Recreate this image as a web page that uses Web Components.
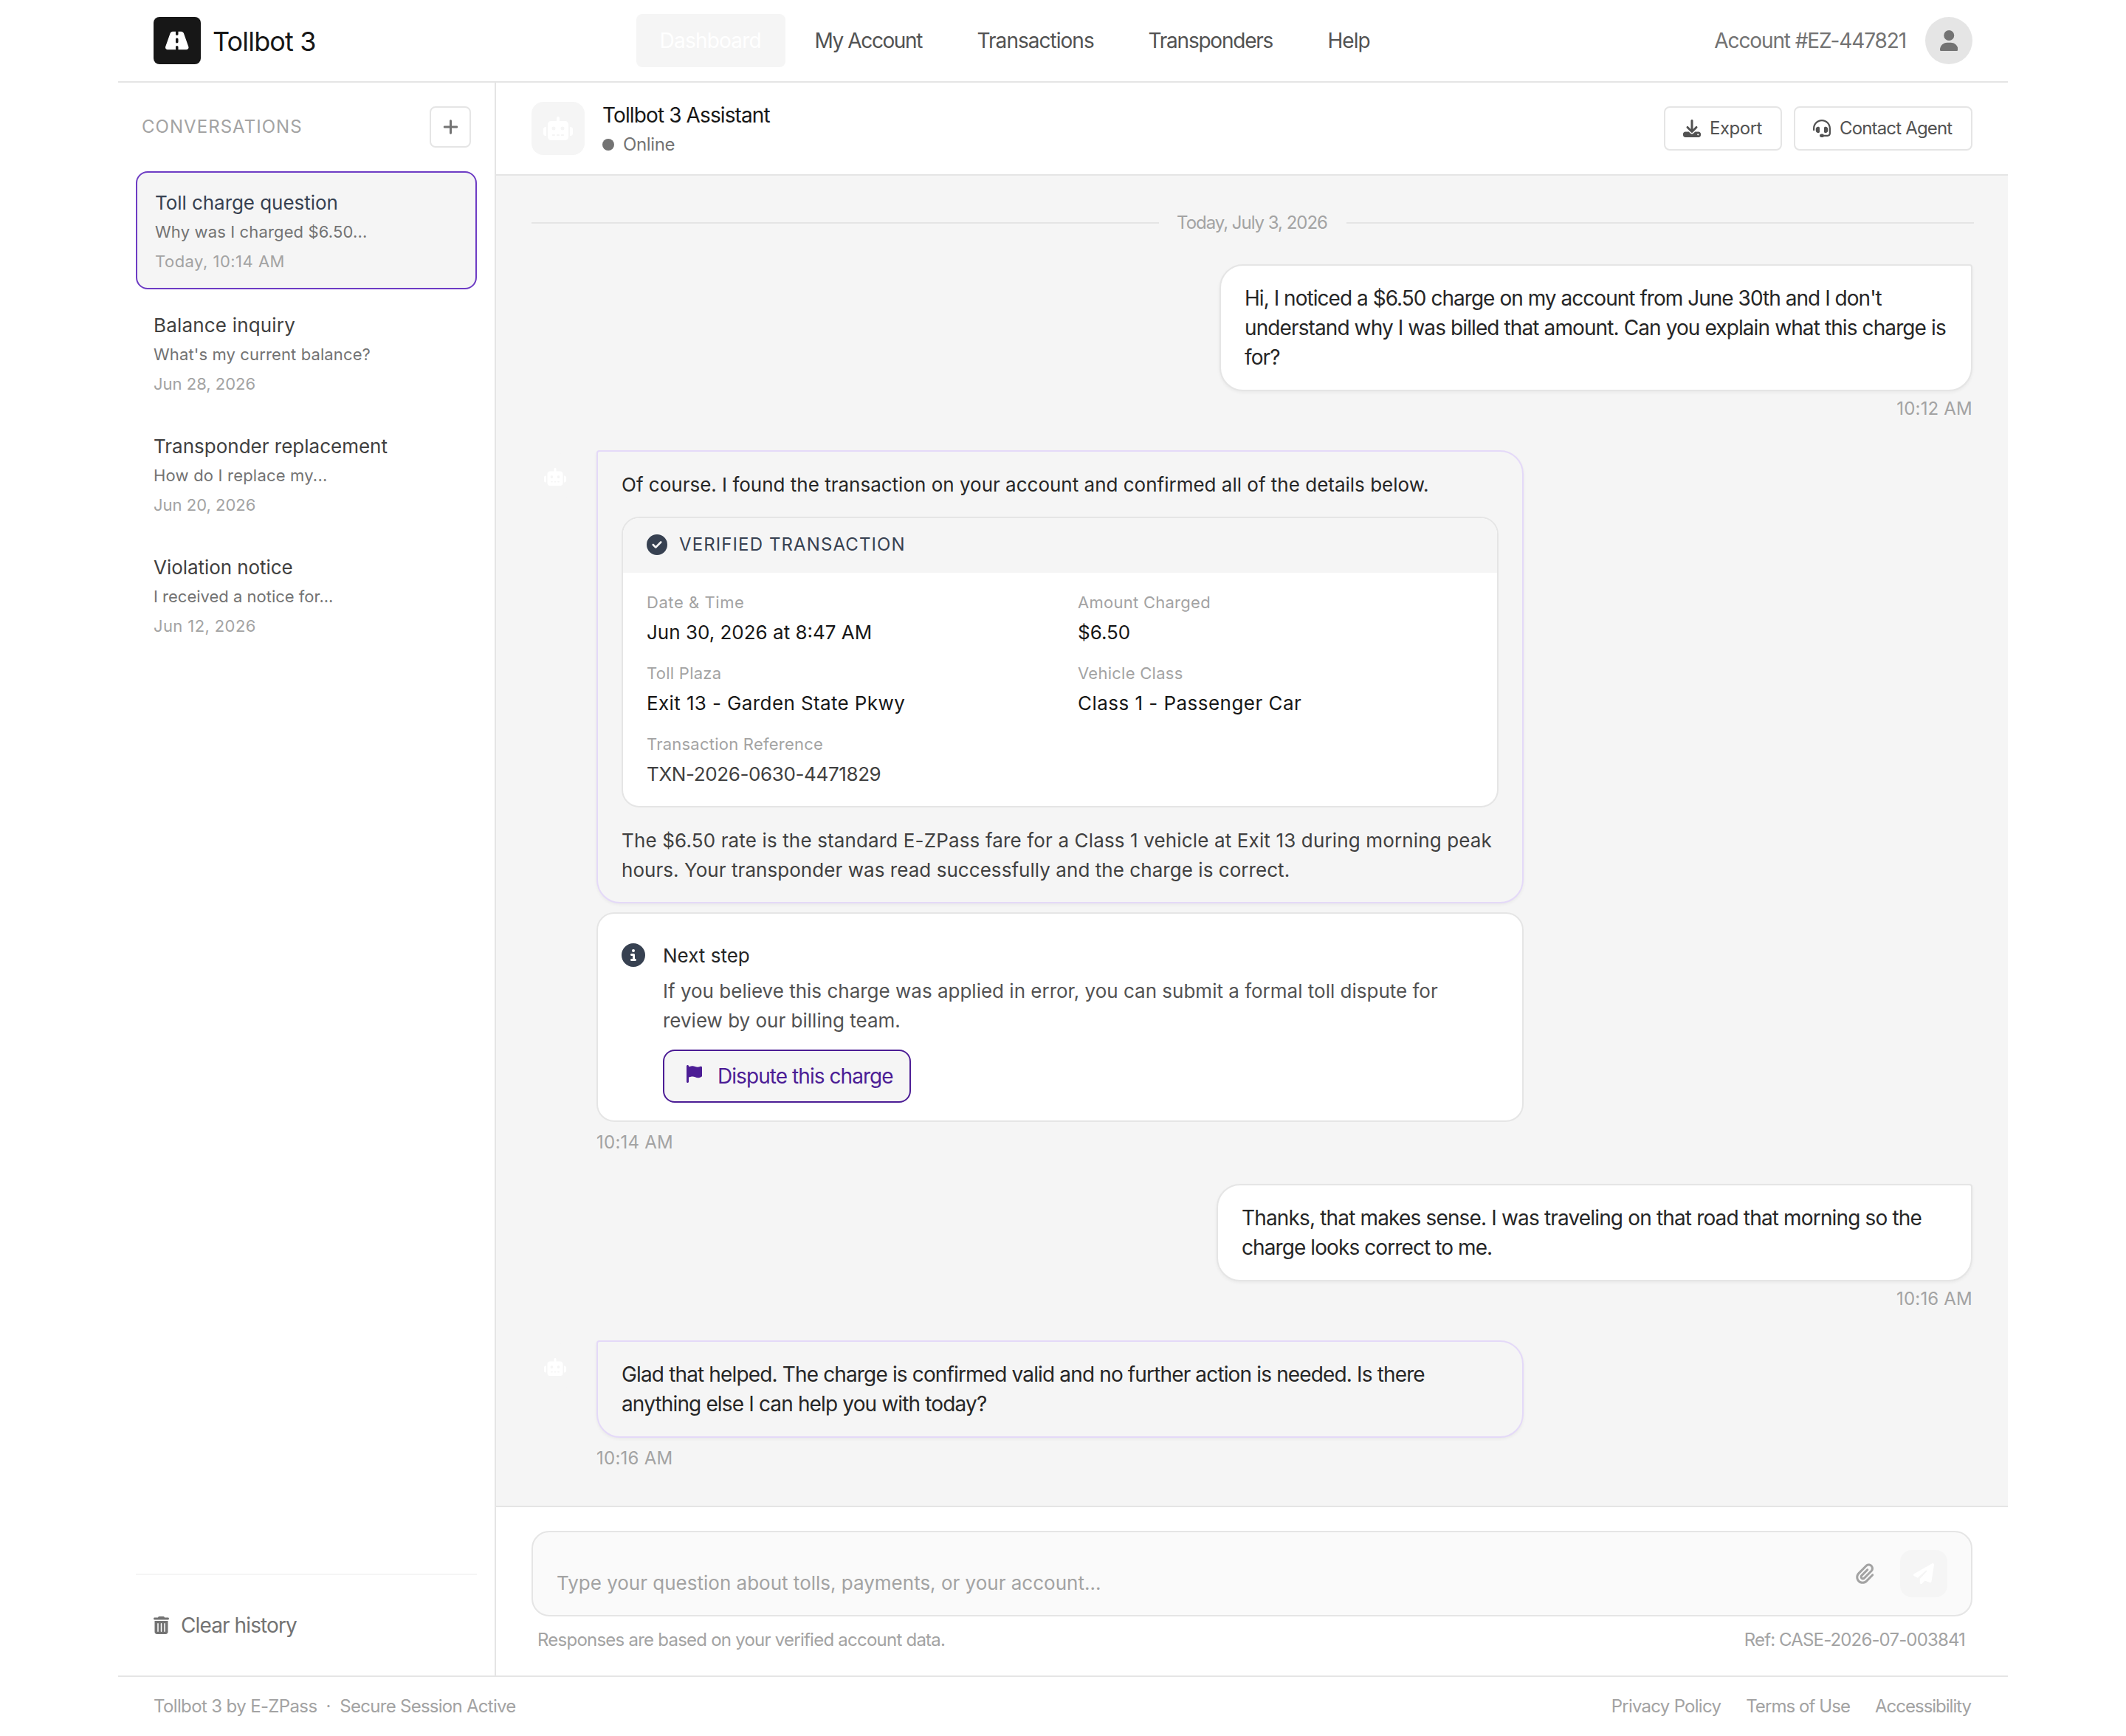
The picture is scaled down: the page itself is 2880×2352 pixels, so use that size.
<!DOCTYPE html>
<html lang="en">
<head>
<meta charset="utf-8">
<title>Tollbot 3</title>
<style>
  :root {
    --ink: #171717;
    --body: #262626;
    --strong: #404040;
    --medium: #525252;
    --muted: #737373;
    --faint: #a3a3a3;
    --line: #e5e5e5;
    --fill: #f5f5f5;
    --slate: #374151;
    --lavender: #e4d9f8;
    --violet: #6d3cc4;
    --deep-violet: #4c1d95;
  }
  body {
    margin: 0;
    background: #fff;
    font-family: Inter, "Liberation Sans", sans-serif;
    color: var(--body);
  }
</style>
</head>
<body>
<toll-app></toll-app>

<script>
const ICONS = {
  road: [576, 'M256 32H181.2c-27.1 0-51.3 17.1-60.3 42.6L3.1 407.2C1.1 413 0 419.2 0 425.4C0 455.5 24.5 480 54.6 480H256V416c0-17.7 14.3-32 32-32s32 14.3 32 32v64H521.4c30.2 0 54.6-24.5 54.6-54.6c0-6.2-1.1-12.4-3.1-18.2L455.1 74.6C446 49.1 421.9 32 394.8 32H320V96c0 17.7-14.3 32-32 32s-32-14.3-32-32V32zm64 192v64c0 17.7-14.3 32-32 32s-32-14.3-32-32V224c0-17.7 14.3-32 32-32s32 14.3 32 32z'],
  robot: [640, 'M320 0c17.7 0 32 14.3 32 32V96H472c39.8 0 72 32.2 72 72V440c0 39.8-32.2 72-72 72H168c-39.8 0-72-32.2-72-72V168c0-39.8 32.2-72 72-72H288V32c0-17.7 14.3-32 32-32zM208 384c-8.8 0-16 7.2-16 16s7.2 16 16 16h32c8.8 0 16-7.2 16-16s-7.2-16-16-16H208zm96 0c-8.8 0-16 7.2-16 16s7.2 16 16 16h32c8.8 0 16-7.2 16-16s-7.2-16-16-16H304zm96 0c-8.8 0-16 7.2-16 16s7.2 16 16 16h32c8.8 0 16-7.2 16-16s-7.2-16-16-16H400zM264 256a40 40 0 1 0 -80 0 40 40 0 1 0 80 0zm152 40a40 40 0 1 0 0-80 40 40 0 1 0 0 80zM48 224H64V416H48c-26.5 0-48-21.5-48-48V272c0-26.5 21.5-48 48-48zm544 0c26.5 0 48 21.5 48 48v96c0 26.5-21.5 48-48 48H576V224h16z'],
  user: [448, 'M224 256A128 128 0 1 0 224 0a128 128 0 1 0 0 256zm-45.7 48C79.8 304 0 383.8 0 482.3C0 498.7 13.3 512 29.7 512H418.3c16.4 0 29.7-13.3 29.7-29.7C448 383.8 368.2 304 269.7 304H178.3z'],
  plus: [448, 'M256 80c0-17.7-14.3-32-32-32s-32 14.3-32 32V224H48c-17.7 0-32 14.3-32 32s14.3 32 32 32H192V432c0 17.7 14.3 32 32 32s32-14.3 32-32V288H400c17.7 0 32-14.3 32-32s-14.3-32-32-32H256V80z'],
  download: [512, 'M288 32c0-17.7-14.3-32-32-32s-32 14.3-32 32V274.7l-73.4-73.4c-12.5-12.5-32.8-12.5-45.3 0s-12.5 32.8 0 45.3l128 128c12.5 12.5 32.8 12.5 45.3 0l128-128c12.5-12.5 12.5-32.8 0-45.3s-32.8-12.5-45.3 0L288 274.7V32zM64 352c-35.3 0-64 28.7-64 64v32c0 35.3 28.7 64 64 64H448c35.3 0 64-28.7 64-64V416c0-35.3-28.7-64-64-64H346.5l-45.3 45.3c-25 25-65.5 25-90.5 0L165.5 352H64zm368 56a24 24 0 1 1 0 48 24 24 0 1 1 0-48z'],
  headset: [512, 'M256 48C141.1 48 48 141.1 48 256v40c0 13.3-10.7 24-24 24s-24-10.7-24-24V256C0 114.6 114.6 0 256 0S512 114.6 512 256V400.1c0 48.6-39.4 88-88.1 88L313.6 488c-8.3 14.3-23.8 24-41.6 24H240c-26.5 0-48-21.5-48-48s21.5-48 48-48h32c17.8 0 33.3 9.7 41.6 24l110.4 .1c22.1 0 40-17.9 40-40V256c0-114.9-93.1-208-208-208zM144 208h16c17.7 0 32 14.3 32 32V352c0 17.7-14.3 32-32 32H144c-35.3 0-64-28.7-64-64V272c0-35.3 28.7-64 64-64zm224 0c35.3 0 64 28.7 64 64v48c0 35.3-28.7 64-64 64H352c-17.7 0-32-14.3-32-32V240c0-17.7 14.3-32 32-32h16z'],
  check: [512, 'M256 512A256 256 0 1 0 256 0a256 256 0 1 0 0 512zM369 209L241 337c-9.4 9.4-24.6 9.4-33.9 0l-64-64c-9.4-9.4-9.4-24.6 0-33.9s24.6-9.4 33.9 0l47 47L335 175c9.4-9.4 24.6-9.4 33.9 0s9.4 24.6 0 33.9z'],
  info: [512, 'M256 512A256 256 0 1 0 256 0a256 256 0 1 0 0 512zM216 336h24V272H216c-13.3 0-24-10.7-24-24s10.7-24 24-24h48c13.3 0 24 10.7 24 24v88h8c13.3 0 24 10.7 24 24s-10.7 24-24 24H216c-13.3 0-24-10.7-24-24s10.7-24 24-24zm40-208a32 32 0 1 1 0 64 32 32 0 1 1 0-64z'],
  flag: [448, 'M64 32C64 14.3 49.7 0 32 0S0 14.3 0 32V64 368 480c0 17.7 14.3 32 32 32s32-14.3 32-32V352l64.3-16.1c41.1-10.3 84.6-5.5 122.5 13.4c44.2 22.1 95.5 24.8 141.7 7.4l34.7-13c12.5-4.7 20.8-16.6 20.8-30V66.1c0-23-24.2-38-44.8-27.7l-9.6 4.8c-46.3 23.2-100.8 23.2-147.1 0c-35.1-17.6-75.4-22-113.5-12.5L64 48V32z'],
  trash: [448, 'M135.2 17.7L128 32H32C14.3 32 0 46.3 0 64S14.3 96 32 96H416c17.7 0 32-14.3 32-32s-14.3-32-32-32H320l-7.2-14.3C307.4 6.8 296.3 0 284.2 0H163.8c-12.1 0-23.2 6.8-28.6 17.7zM416 128H32V448c0 35.3 28.7 64 64 64H352c35.3 0 64-28.7 64-64V128zM144 208V432c0 8.8-7.2 16-16 16s-16-7.2-16-16V208c0-8.8 7.2-16 16-16s16 7.2 16 16zm96 0V432c0 8.8-7.2 16-16 16s-16-7.2-16-16V208c0-8.8 7.2-16 16-16s16 7.2 16 16zm96 0V432c0 8.8-7.2 16-16 16s-16-7.2-16-16V208c0-8.8 7.2-16 16-16s16 7.2 16 16z'],
  clip: [448, 'M364.2 83.8c-24.4-24.4-64-24.4-88.4 0l-184 184c-42.1 42.1-42.1 110.3 0 152.4s110.3 42.1 152.4 0l152-152c10.9-10.9 28.7-10.9 39.6 0s10.9 28.7 0 39.6l-152 152c-64 64-167.6 64-231.6 0s-64-167.6 0-231.6l184-184c46.3-46.3 121.3-46.3 167.6 0s46.3 121.3 0 167.6l-176 176c-28.6 28.6-75 28.6-103.6 0s-28.6-75 0-103.6l144-144c10.9-10.9 28.7-10.9 39.6 0s10.9 28.7 0 39.6l-144 144c-6.7 6.7-6.7 17.7 0 24.4s17.7 6.7 24.4 0l176-176c24.4-24.4 24.4-64 0-88.4z'],
  plane: [512, 'M498.1 5.6c10.1 7 15.4 19.1 13.5 31.2l-64 416c-1.5 9.7-7.4 18.2-16 23s-18.9 5.4-28 1.6L284 427.7l-68.5 74.1c-8.9 9.7-22.9 12.9-35.2 8.1S160 493.2 160 480V396.4c0-4 1.5-7.8 4.2-10.7L331.8 202.8c5.8-6.3 5.6-16-.4-22s-15.7-6.4-22-.7L106 360.8 17.7 316.6C7.1 311.3 .3 300.7 0 288.9s5.9-22.8 16.1-28.7l448-256c10.7-6.1 23.9-5.5 34 1.4z']
}

// registers an element whose shadow root is filled from a template
function define(name, html) {
  const template = document.createElement('template')
  template.innerHTML = html
  customElements.define(name, class extends HTMLElement {
    constructor() {
      super()
      this.attachShadow({ mode: 'open' }).appendChild(template.content.cloneNode(true))
    }
  })
}

// <toll-icon name="flag" size="24">, size is the height
customElements.define('toll-icon', class extends HTMLElement {
  connectedCallback() {
    const [width, path] = ICONS[this.getAttribute('name')]
    const size = Number(this.getAttribute('size'))
    const root = this.shadowRoot || this.attachShadow({ mode: 'open' })
    root.innerHTML = `
      <style>
      :host { display: block; flex: none; }
      svg { display: block; fill: currentColor; }
      </style>
      <svg width="${width / 512 * size}" height="${size}" viewBox="0 0 ${width} 512"><path fill-rule="evenodd" d="${path}"/></svg>
    `
  }
})

define('toll-header', `
  <style>
  :host {
    display: flex;
    justify-content: space-between;
    align-items: center;
    height: 110px;
    padding: 0 48px;
    border-bottom: 2px solid var(--line);
    white-space: nowrap;
  }
  .brand, .account, nav { display: flex; align-items: center; }
  .brand { gap: 16px; font-size: 36px; letter-spacing: -0.023em; color: var(--ink); }
  .brand span { padding-top: 2px; }
  .logo {
    display: flex;
    align-items: center;
    justify-content: center;
    width: 64px;
    height: 64px;
    border-radius: 8px;
    background: var(--ink);
    color: #fff;
  }
  nav { gap: 8px; font-size: 28px; color: var(--medium); }
  nav span {
    box-sizing: border-box;
    height: 72px;
    line-height: 72px;
    padding-left: 32px;
    border-radius: 8px;
  }
  .active { background: var(--fill); color: #fff; }
  .account { gap: 26px; font-size: 28px; letter-spacing: -0.0395em; color: var(--muted); }
  .avatar {
    display: flex;
    align-items: center;
    justify-content: center;
    width: 64px;
    height: 64px;
    border-radius: 50%;
    background: var(--line);
  }
  </style>
  <div class="brand"><div class="logo"><toll-icon name="road" size="28"></toll-icon></div><span>Tollbot 3</span></div>
  <nav>
    <span class="active" style="width:202px;letter-spacing:-.028em">Dashboard</span>
    <span style="width:212px;letter-spacing:-.05em">My Account</span>
    <span style="width:224px;letter-spacing:-.0346em">Transactions</span>
    <span style="width:235px;letter-spacing:-.044em">Transponders</span>
    <span style="width:122px;letter-spacing:-.0347em">Help</span>
  </nav>
  <div class="account">Account #EZ-447821<div class="avatar"><toll-icon name="user" size="28"></toll-icon></div></div>
`)

define('conversation-item', `
  <style>
  :host {
    display: flex;
    flex-direction: column;
    padding: 20px 24px;
    border-radius: 16px;
    white-space: nowrap;
    font-size: 22px;
    line-height: 40px;
    color: var(--muted);
  }
  :host([selected]) {
    border: 2px solid var(--violet);
    background: var(--fill);
    --title: var(--slate);
  }
  .title { padding-top: 1px; margin-bottom: -1px; font-size: 26px; color: var(--title, var(--strong)); }
  .date { margin-top: 4px; line-height: 32px; color: var(--faint); }
  </style>
  <div class="title"><slot name="title"></slot></div>
  <div><slot></slot></div>
  <div class="date"><slot name="date"></slot></div>
`)

define('toll-sidebar', `
  <style>
  :host {
    box-sizing: border-box;
    display: flex;
    flex-direction: column;
    width: 512px;
    border-right: 2px solid var(--line);
    padding: 0 24px;
  }
  header {
    display: flex;
    align-items: center;
    justify-content: space-between;
    padding: 32px 8px;
    font-size: 24px;
    letter-spacing: .0435em;
    color: var(--faint);
  }
  header span { padding-bottom: 2px; }
  .add {
    box-sizing: border-box;
    display: flex;
    align-items: center;
    justify-content: center;
    width: 56px;
    height: 56px;
    border: 2px solid var(--line);
    border-radius: 8px;
    color: var(--muted);
  }
  .list { flex: 1; display: flex; flex-direction: column; gap: 8px; }
  footer {
    display: flex;
    align-items: center;
    gap: 16px;
    height: 136px;
    padding: 0 24px;
    border-top: 2px solid var(--fill);
    font-size: 28px;
    letter-spacing: -.032em;
    color: var(--muted);
  }
  </style>
  <header><span>CONVERSATIONS</span><div class="add"><toll-icon name="plus" size="24"></toll-icon></div></header>
  <div class="list">
    <conversation-item selected>
      <span slot="title" style="letter-spacing:-.002em">Toll charge question</span>
      <span style="letter-spacing:.0065em">Why was I charged $6.50...</span>
      <span slot="date" style="letter-spacing:.022em">Today, 10:14 AM</span>
    </conversation-item>
    <conversation-item>
      <span slot="title" style="letter-spacing:.007em">Balance inquiry</span>
      <span style="letter-spacing:.0055em">What's my current balance?</span>
      <span slot="date">Jun 28, 2026</span>
    </conversation-item>
    <conversation-item>
      <span slot="title">Transponder replacement</span>
      <span style="letter-spacing:.009em">How do I replace my...</span>
      <span slot="date">Jun 20, 2026</span>
    </conversation-item>
    <conversation-item>
      <span slot="title" style="letter-spacing:-.002em">Violation notice</span>
      <span>I received a notice for...</span>
      <span slot="date" style="letter-spacing:.018em">Jun 12, 2026</span>
    </conversation-item>
  </div>
  <footer><toll-icon name="trash" size="24"></toll-icon>Clear history</footer>
`)

define('outline-button', `
  <style>
  :host {
    box-sizing: border-box;
    display: flex;
    align-items: center;
    gap: 12px;
    height: 60px;
    padding: 0 24px;
    border: 2px solid var(--line);
    border-radius: 8px;
    background: #fff;
    font-size: 24px;
    color: var(--medium);
    white-space: nowrap;
  }
  ::slotted(span) { padding-bottom: 2px; }
  </style>
  <slot></slot>
`)

define('chat-header', `
  <style>
  :host {
    display: flex;
    align-items: center;
    justify-content: space-between;
    height: 124px;
    padding: 0 48px;
    border-bottom: 2px solid var(--line);
    white-space: nowrap;
  }
  .who, .status, .actions { display: flex; align-items: center; }
  .who { gap: 24px; }
  .bot {
    display: flex;
    align-items: center;
    justify-content: center;
    width: 72px;
    height: 72px;
    border-radius: 16px;
    background: var(--fill);
    color: #fff;
  }
  .name { font-size: 28px; line-height: 40px; letter-spacing: -.0315em; color: var(--ink); }
  .status {
    gap: 12px;
    margin-top: 2px;
    font-size: 24px;
    line-height: 34px;
    letter-spacing: -.0145em;
    color: var(--muted);
  }
  .status span { padding-top: 1px; margin-bottom: -1px; }
  .dot { width: 16px; height: 16px; margin-top: 2px; border-radius: 50%; background: var(--muted); }
  .actions { gap: 16px; }
  </style>
  <div class="who">
    <div class="bot"><toll-icon name="robot" size="32"></toll-icon></div>
    <div>
      <div class="name">Tollbot 3 Assistant</div>
      <div class="status"><div class="dot"></div><span>Online</span></div>
    </div>
  </div>
  <div class="actions">
    <outline-button style="width:160px"><toll-icon name="download" size="24"></toll-icon><span style="letter-spacing:-.0202em">Export</span></outline-button>
    <outline-button style="width:242px"><toll-icon name="headset" size="24"></toll-icon><span style="letter-spacing:-.0348em">Contact Agent</span></outline-button>
  </div>
`)

define('date-divider', `
  <style>
  :host {
    display: flex;
    align-items: center;
    gap: 24px;
    margin-right: -2px;
    font-size: 24px;
    line-height: 32px;
    color: var(--faint);
  }
  i { flex: 1; height: 2px; background: var(--line); }
  ::slotted(span) { padding-right: 2px; }
  </style>
  <i></i><slot></slot><i></i>
`)

define('user-message', `
  <style>
  :host { display: flex; flex-direction: column; align-items: flex-end; }
  .bubble {
    box-sizing: border-box;
    width: var(--width);
    padding: 24px 0 24px 32px;
    border: 2px solid var(--line);
    border-radius: 32px 4px 32px 32px;
    background: #fff;
    box-shadow: 0 2px 4px rgba(0, 0, 0, .05);
    font-size: 28px;
    line-height: 40px;
    white-space: nowrap;
  }
  .time { margin-top: 8px; font-size: 24px; line-height: 32px; letter-spacing: .008em; color: var(--faint); }
  </style>
  <div class="bubble"><slot></slot></div>
  <div class="time"><slot name="time"></slot></div>
`)

define('bot-message', `
  <style>
  :host { display: flex; gap: 24px; }
  .bot {
    display: flex;
    align-items: center;
    justify-content: center;
    width: 64px;
    height: 64px;
    margin-top: 4px;
    border-radius: 50%;
    background: var(--fill);
    color: #fff;
  }
  .column { display: flex; flex-direction: column; gap: 12px; width: 1256px; }
  .bubble {
    padding: 24px 32px;
    border: 2px solid var(--lavender);
    border-radius: 4px 32px 32px 32px;
    background: var(--fill);
    box-shadow: 0 2px 4px rgba(0, 0, 0, .05);
    font-size: 26px;
    line-height: 40px;
    white-space: nowrap;
  }
  .time { font-size: 24px; line-height: 32px; letter-spacing: .01em; color: var(--faint); }
  </style>
  <div class="bot"><toll-icon name="robot" size="24"></toll-icon></div>
  <div class="column">
    <div class="bubble"><slot></slot></div>
    <slot name="extra"></slot>
    <div class="time"><slot name="time"></slot></div>
  </div>
`)

define('detail-field', `
  <style>
  :host { display: block; white-space: nowrap; }
  .label { font-size: 22px; line-height: 32px; color: var(--faint); }
  .value { padding-top: 5px; margin-bottom: -1px; font-size: 26px; line-height: 40px; color: var(--value, var(--ink)); }
  </style>
  <div class="label"><slot name="label"></slot></div>
  <div class="value"><slot></slot></div>
`)

define('transaction-card', `
  <style>
  :host {
    display: block;
    margin: 24px 0;
    border: 2px solid var(--line);
    border-radius: 24px;
    background: #fff;
    overflow: hidden;
  }
  header {
    display: flex;
    align-items: center;
    gap: 16px;
    height: 72px;
    padding: 0 32px;
    border-bottom: 2px solid var(--fill);
    background: var(--fill);
    font-size: 24px;
    letter-spacing: .046em;
    color: var(--slate);
  }
  .grid {
    display: grid;
    grid-template-columns: 1fr 1fr;
    gap: 20px 48px;
    padding: 24px 32px;
  }
  </style>
  <header><toll-icon name="check" size="28"></toll-icon>VERIFIED TRANSACTION</header>
  <div class="grid"><slot></slot></div>
`)

define('next-step', `
  <style>
  :host {
    display: flex;
    gap: 24px;
    padding: 36px 32px 24px;
    border: 2px solid var(--line);
    border-radius: 24px;
    background: #fff;
    white-space: nowrap;
  }
  toll-icon { color: var(--slate); margin-top: 4px; }
  .title { font-size: 26px; line-height: 42px; color: var(--body); }
  .text { margin-top: 7px; font-size: 26px; line-height: 40px; color: var(--medium); }
  .dispute {
    box-sizing: border-box;
    display: flex;
    align-items: center;
    gap: 21px;
    width: 336px;
    height: 72px;
    margin-top: 19px;
    padding-left: 30px;
    border: 2px solid var(--deep-violet);
    border-radius: 16px;
    background: var(--fill);
    font-size: 28px;
    letter-spacing: -.0335em;
    color: var(--deep-violet);
  }
  .dispute toll-icon { margin-top: -6px; color: inherit; }
  </style>
  <toll-icon name="info" size="32"></toll-icon>
  <div>
    <div class="title">Next step</div>
    <div class="text"><slot></slot></div>
    <div class="dispute"><toll-icon name="flag" size="24"></toll-icon>Dispute this charge</div>
  </div>
`)

define('chat-thread', `
  <style>
  :host {
    flex: 1;
    display: flex;
    flex-direction: column;
    gap: 40px;
    padding: 48px 48px 0;
    background: var(--fill);
  }
  .intro, .explain { padding-top: 1px; margin-bottom: -1px; }
  .explain { color: var(--strong); }
  </style>
  <date-divider><span style="letter-spacing:-.0425em">Today, July 3, 2026</span></date-divider>
  <user-message style="--width:1020px">
    <span style="letter-spacing:-.0346em">Hi, I noticed a $6.50 charge on my account from June 30th and I don't</span><br>
    <span style="letter-spacing:-.032em">understand why I was billed that amount. Can you explain what this charge is</span><br>
    <span style="letter-spacing:-.0315em">for?</span>
    <span slot="time">10:12 AM</span>
  </user-message>
  <bot-message>
    <div class="intro">Of course. I found the transaction on your account and confirmed all of the details below.</div>
    <transaction-card>
      <detail-field><span slot="label" style="letter-spacing:.0255em">Date &amp; Time</span>Jun 30, 2026 at 8:47 AM</detail-field>
      <detail-field><span slot="label" style="letter-spacing:.012em">Amount Charged</span>$6.50</detail-field>
      <detail-field><span slot="label" style="letter-spacing:.012em">Toll Plaza</span><span style="letter-spacing:.015em">Exit 13 - Garden State Pkwy</span></detail-field>
      <detail-field><span slot="label" style="letter-spacing:.012em">Vehicle Class</span><span style="letter-spacing:.0179em">Class 1 - Passenger Car</span></detail-field>
      <detail-field style="--value:var(--strong)"><span slot="label" style="letter-spacing:.0106em">Transaction Reference</span><span style="letter-spacing:-.0145em">TXN-2026-0630-4471829</span></detail-field>
    </transaction-card>
    <div class="explain">
      <span style="letter-spacing:.0055em">The $6.50 rate is the standard E-ZPass fare for a Class 1 vehicle at Exit 13 during morning peak</span><br>
      <span style="letter-spacing:.002em">hours. Your transponder was read successfully and the charge is correct.</span>
    </div>
    <next-step slot="extra">If you believe this charge was applied in error, you can submit a formal toll dispute for<br>review by our billing team.</next-step>
    <span slot="time">10:14 AM</span>
  </bot-message>
  <user-message style="--width:1024px">
    <span style="letter-spacing:-.03em">Thanks, that makes sense. I was traveling on that road that morning so the</span><br>
    <span style="letter-spacing:-.0325em">charge looks correct to me.</span>
    <span slot="time">10:16 AM</span>
  </user-message>
  <bot-message>
    <div style="font-size:28px;letter-spacing:-.0305em">Glad that helped. The charge is confirmed valid and no further action is needed. Is there<br>anything else I can help you with today?</div>
    <span slot="time">10:16 AM</span>
  </bot-message>
`)

define('chat-composer', `
  <style>
  :host {
    display: block;
    padding: 32px 48px;
    border-top: 2px solid var(--line);
    font-size: 24px;
    line-height: 32px;
    color: var(--faint);
    white-space: nowrap;
  }
  .box {
    display: flex;
    align-items: flex-end;
    gap: 16px;
    padding: 24px 32px;
    border: 2px solid var(--line);
    border-radius: 24px;
    background: #fafafa;
  }
  .placeholder { flex: 1; margin-bottom: -1px; font-size: 26px; line-height: 40px; }
  .attach, .send { display: flex; align-items: center; justify-content: center; width: 64px; height: 64px; }
  .send { border-radius: 16px; background: var(--fill); color: #fff; }
  .note { display: flex; justify-content: space-between; margin-top: 16px; padding: 0 10px 0 8px; }
  </style>
  <div class="box">
    <div class="placeholder">Type your question about tolls, payments, or your account...</div>
    <div class="attach"><toll-icon name="clip" size="28"></toll-icon></div>
    <div class="send"><toll-icon name="plane" size="28"></toll-icon></div>
  </div>
  <div class="note">
    <span style="letter-spacing:-.0318em">Responses are based on your verified account data.</span>
    <span style="letter-spacing:-.0355em">Ref: CASE-2026-07-003841</span>
  </div>
`)

define('toll-footer', `
  <style>
  :host {
    display: flex;
    align-items: center;
    justify-content: space-between;
    height: 78px;
    padding: 0 50px 2px 48px;
    border-top: 2px solid var(--line);
    font-size: 24px;
    color: var(--faint);
    white-space: nowrap;
  }
  div { display: flex; }
  .left { gap: 12px; }
  .links { gap: 34px; }
  </style>
  <div class="left">
    <span style="letter-spacing:-.0263em">Tollbot 3 by E-ZPass</span>
    <span>·</span>
    <span style="letter-spacing:-.0302em">Secure Session Active</span>
  </div>
  <div class="links">
    <span style="letter-spacing:-.0306em">Privacy Policy</span>
    <span style="letter-spacing:-.0387em">Terms of Use</span>
    <span style="letter-spacing:-.042em">Accessibility</span>
  </div>
`)

define('toll-app', `
  <style>
  :host {
    display: flex;
    flex-direction: column;
    width: 2560px;
    height: 2352px;
    margin: 0 auto;
  }
  .main { flex: 1; display: flex; min-height: 0; }
  .chat { flex: 1; display: flex; flex-direction: column; min-width: 0; }
  </style>
  <toll-header></toll-header>
  <div class="main">
    <toll-sidebar></toll-sidebar>
    <div class="chat">
      <chat-header></chat-header>
      <chat-thread></chat-thread>
      <chat-composer></chat-composer>
    </div>
  </div>
  <toll-footer></toll-footer>
`)
</script>
</body>
</html>
